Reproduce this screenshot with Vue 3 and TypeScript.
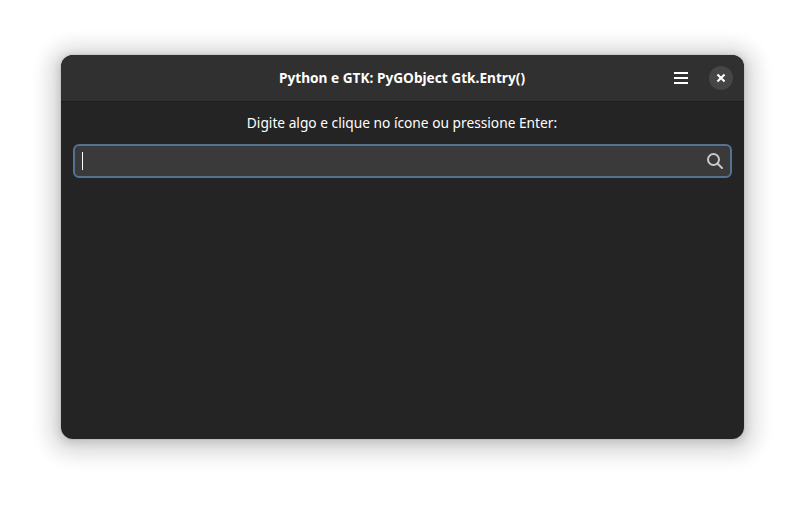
<script setup lang="ts">
import { ref } from 'vue'
const title = ref('Python e GTK: PyGObject Gtk.Entry()')
const label = ref('Digite algo e clique no ícone ou pressione Enter:')
</script>

<template>
  <main class="desktop">
    <section class="window">
      <header class="headerbar">
        <h1 class="title">{{ title }}</h1>
        <div class="actions">
          <button class="menu" aria-label="Menu">
            <svg width="16" height="16" viewBox="0 0 16 16"><path d="M1 2h14v2H1zM1 7h14v2H1zM1 12h14v2H1z" fill="#fff" /></svg>
          </button>
          <button class="close" aria-label="Close">
            <svg width="16" height="16" viewBox="0 0 16 16"><path d="M5.2 5.2l5.6 5.6M10.8 5.2l-5.6 5.6" stroke="#fff" stroke-width="2.1" stroke-linecap="square" /></svg>
          </button>
        </div>
      </header>
      <div class="content">
        <p class="label">{{ label }}</p>
        <div class="entry">
          <span class="caret"></span>
          <svg width="16" height="16" viewBox="0 0 16 16" fill="none" stroke="#c8c8c8" stroke-width="2"><circle cx="6.5" cy="6.5" r="5.5" /><path d="M10.5 10.5l4.5 4.5" stroke-linecap="round" /></svg>
        </div>
      </div>
    </section>
  </main>
</template>

<style>
body { background: #fff; overflow: hidden; }
</style>
<style scoped>
.desktop { box-sizing: border-box; width: 805px; height: 506px; padding: 55px 61px 67px; font-family: "Noto Sans", sans-serif; color: #fff; }
.window { box-sizing: border-box; height: 384px; border-radius: 12px; background: #242424; overflow: hidden; box-shadow: 0 2px 8px 2px rgba(0,0,0,.13), 0 3px 20px 10px rgba(0,0,0,.09), 0 4px 18px 17px rgba(0,0,0,.05), 0 0 0 1px rgba(0,0,0,.05); }
.headerbar { box-sizing: border-box; height: 47px; display: grid; grid-template-columns: 92px 1fr 92px; align-items: center; background: #303030; border-bottom: 1px solid #1e1e1e; }
.title { grid-column: 2; margin: 0; text-align: center; font-size: 14.67px; line-height: 20px; font-weight: 700; white-space: nowrap; transform: translate(-.5px, -1px) scaleX(.932); }
.actions { display: flex; align-items: center; justify-content: flex-end; gap: 20px; padding-right: 11px; }
button { display: flex; padding: 0; border: 0; background: none; }
.close { width: 24px; height: 24px; align-items: center; justify-content: center; border-radius: 50%; background: #464646; }
.content { padding: 11px 12px 12px; }
.label { margin: 0 0 10px; text-align: center; font-size: 15px; line-height: 21px; transform: translate(-.5px, -1px) scaleX(.916); }
.entry { box-sizing: border-box; height: 34px; display: flex; align-items: center; justify-content: space-between; padding: 0 7px; border: 2px solid #537294; border-radius: 6px; background: #3a3a3a; }
.caret { width: 1px; height: 18px; background: #fff; }
</style>
